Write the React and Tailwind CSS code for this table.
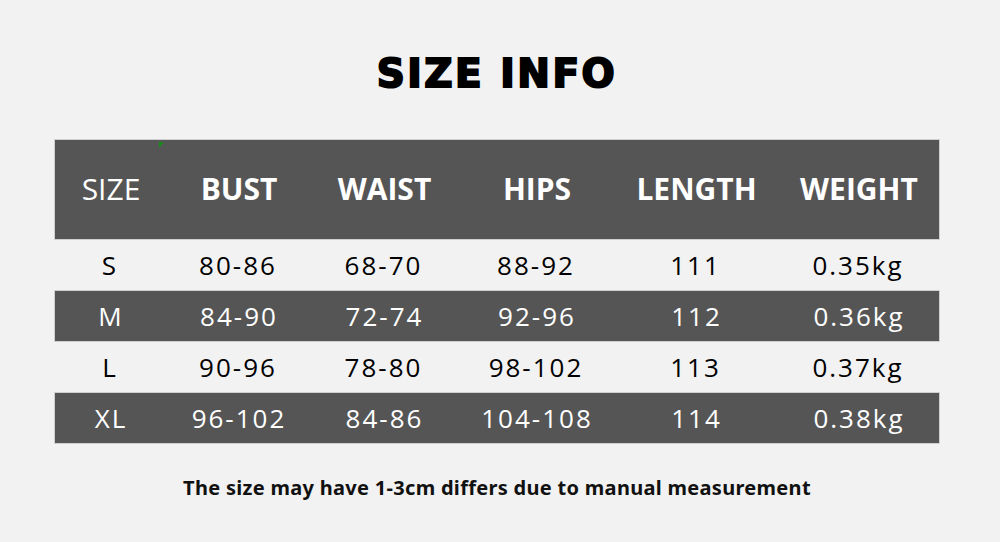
import React from 'react';

const headers = ['SIZE', 'BUST', 'WAIST', 'HIPS', 'LENGTH', 'WEIGHT'];

const rows = [
  ['S', '80-86', '68-70', '88-92', '111', '0.35kg'],
  ['M', '84-90', '72-74', '92-96', '112', '0.36kg'],
  ['L', '90-96', '78-80', '98-102', '113', '0.37kg'],
  ['XL', '96-102', '84-86', '104-108', '114', '0.38kg'],
];

const cols = 'grid grid-cols-[112px_144px_147px_158px_161px_164px]';

export default function App() {
  return (
    <div className="w-[1000px] h-[542px] bg-[#f2f2f2] flex flex-col items-center overflow-hidden pr-[6px]">
      {/* Title */}
      <h1 className="mt-[52px] h-[44px] leading-[44px] text-[39px] font-bold tracking-[2.5px] text-black [font-family:'DejaVu_Sans',sans-serif] [-webkit-text-stroke:2px_black]">
        SIZE INFO
      </h1>

      {/* Table */}
      <div className="mt-[43px] w-[886px] [font-family:'Open_Sans',sans-serif]">
        <div className={`${cols} relative h-[101px] items-center bg-[#555555] border border-[#cfcfcf] text-white text-[30px] pb-[3px]`}>
          <span className="absolute left-[104px] top-[2px] w-0 h-0 border-t-[6px] border-t-[#1a8a1a] border-r-[5px] border-r-transparent" />
          {headers.map((h, i) => (
            <div key={h} className={`text-center ${i === 0 ? 'font-normal' : 'font-bold'}`}>
              {h}
            </div>
          ))}
        </div>
        {rows.map((r, ri) => (
          <div
            key={r[0]}
            className={`${cols} items-center text-[26px] tracking-[2px] ${
              ri % 2 === 1
                ? 'h-[52px] bg-[#555555] text-white border border-[#cfcfcf]'
                : 'h-[50px] text-black'
            }`}
          >
            {r.map((c, ci) => (
              <div key={ci} className="text-center">
                {c}
              </div>
            ))}
          </div>
        ))}
      </div>

      {/* Note */}
      <p className="mt-[29px] text-[20px] font-bold tracking-[0.3px] text-[#111] [font-family:'Noto_Sans',sans-serif]">
        The size may have 1-3cm differs due to manual measurement
      </p>
    </div>
  );
}
